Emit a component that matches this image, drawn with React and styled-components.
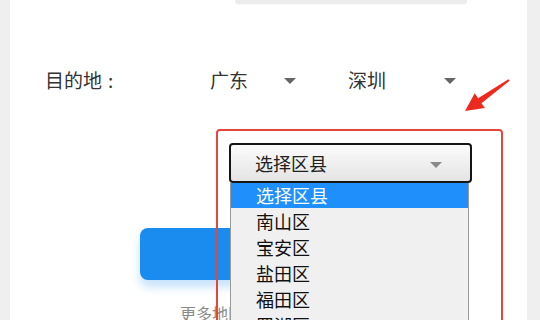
import React from "react";
import styled, { createGlobalStyle } from "styled-components";

const Global = createGlobalStyle`
  html, body { margin: 0; padding: 0; }
  body {
    background: #efefef;
    font-family: "Noto Sans CJK SC", "Noto Sans", sans-serif;
  }
`;

const Page = styled.div`
  width: 540px;
  height: 320px;
  overflow: hidden;
  padding-left: 10px;
  box-sizing: border-box;
  background: #efefef;
`;

const Card = styled.div`
  position: relative;
  width: 517px;
  height: 320px;
  overflow: hidden;
  background: #fff;
  display: flex;
  flex-direction: column;
  align-items: flex-start;
  & > * {
    flex-shrink: 0;
  }
`;

const TopInput = styled.div`
  margin-left: 225px;
  width: 232px;
  height: 4px;
  background: #ececec;
  border-radius: 0 0 14px 14px;
  box-shadow: 0 1px 2px rgba(0, 0, 0, 0.04);
`;

const Row = styled.div`
  margin-top: 60px;
  height: 30px;
  display: flex;
  align-items: center;
  padding-left: 35px;
  color: #333;
  font-size: 19px;
`;

const Label = styled.span`
  width: 165px;
  display: flex;
  align-items: center;
`;

const Colon = styled.span`
  margin-left: 6px;
`;

const Picker = styled.div`
  width: ${(p) => p.$w}px;
  margin-right: ${(p) => p.$gap || 0}px;
  display: flex;
  align-items: center;
  justify-content: space-between;
  padding-right: 2px;
  box-sizing: border-box;
  font-size: 19px;
  color: #333;
`;

const Caret = styled.span`
  width: 0;
  height: 0;
  border-left: 6px solid transparent;
  border-right: 6px solid transparent;
  border-top: 6px solid ${(p) => p.$color || "#666"};
  margin-top: 4px;
`;

const SelectWrap = styled.div`
  position: relative;
  margin-top: 49px;
  margin-left: 219px;
  z-index: 2;
`;

const SelectBox = styled.div`
  width: 243px;
  height: 40px;
  box-sizing: border-box;
  border: 2px solid #151515;
  border-radius: 4px;
  background: linear-gradient(#fbfbfb, #e4e4e4);
  display: flex;
  align-items: center;
  justify-content: space-between;
  padding: 0 28px 0 24px;
  font-size: 18px;
  color: #222;
`;

const List = styled.ul`
  position: absolute;
  left: 1px;
  top: 40px;
  width: 239px;
  margin: 0;
  padding: 0;
  list-style: none;
  background: #f0f0f0;
  border-left: 1px solid #9a9a9a;
  border-right: 1px solid #9a9a9a;
  box-sizing: border-box;
`;

const Item = styled.li`
  height: ${(p) => (p.$active ? 25 : 26)}px;
  line-height: ${(p) => (p.$active ? 25 : 26)}px;
  padding-left: 25px;
  font-size: 18px;
  color: ${(p) => (p.$active ? "#fff" : "#111")};
  background: ${(p) => (p.$active ? "#1e8ffb" : "transparent")};
`;

const Button = styled.div`
  margin-top: 45px;
  margin-left: 130px;
  width: 258px;
  height: 52px;
  border-radius: 8px;
  background: #1a8cef;
  box-shadow: 0 7px 10px rgba(26, 140, 239, 0.25);
`;

const More = styled.div`
  margin-top: 22px;
  margin-left: 170px;
  font-size: 16px;
  line-height: 22px;
  color: #8a8a8a;
  white-space: nowrap;
`;

const Highlight = styled.div`
  position: absolute;
  left: 206px;
  top: 129px;
  width: 287px;
  height: 260px;
  box-sizing: border-box;
  border: 2px solid #e5463c;
  border-radius: 4px;
  z-index: 3;
  pointer-events: none;
`;

const ArrowSvg = styled.svg`
  position: absolute;
  left: 430px;
  top: 70px;
  z-index: 3;
`;

const districts = ["选择区县", "南山区", "宝安区", "盐田区", "福田区", "罗湖区", "龙岗区"];

export default function App() {
  return (
    <Page>
      <Global />
      <Card>
        <TopInput />
        <Row>
          <Label>
            目的地<Colon>:</Colon>
          </Label>
          <Picker $w={88} $gap={50}>
            广东
            <Caret />
          </Picker>
          <Picker $w={110}>
            深圳
            <Caret />
          </Picker>
        </Row>
        <SelectWrap>
          <SelectBox>
            选择区县
            <Caret $color="#8a8a8a" />
          </SelectBox>
          <List>
            {districts.map((d, i) => (
              <Item key={d} $active={i === 0}>
                {d}
              </Item>
            ))}
          </List>
        </SelectWrap>
        <Button />
        <More>更多地区</More>
        <Highlight />
        <ArrowSvg width="80" height="50" viewBox="440 70 80 50">
          <polygon
            points="465,111 474.7,93.3 478.1,98.2 508.4,79.2 509.6,80.8 481.5,103.2 484.9,108.1"
            fill="#ee2a1e"
          />
        </ArrowSvg>
      </Card>
    </Page>
  );
}
